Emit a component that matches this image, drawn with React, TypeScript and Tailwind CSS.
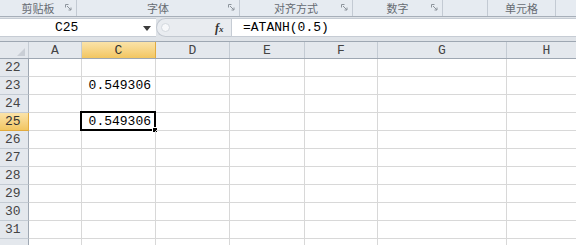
import React from 'react';

const cols = [
  { key: 'A', w: 'w-[53px]' },
  { key: 'C', w: 'w-[74px]' },
  { key: 'D', w: 'w-[74px]' },
  { key: 'E', w: 'w-[75px]' },
  { key: 'F', w: 'w-[73px]' },
  { key: 'G', w: 'w-[129px]' },
  { key: 'H', w: 'w-[80px]' },
];

const rows = [22, 23, 24, 25, 26, 27, 28, 29, 30, 31, 32];

const values: Record<string, string> = {
  'C23': '0.549306',
  'C25': '0.549306',
};

const groups = [
  { label: '剪贴板', w: 'w-[77px]', launcher: true },
  { label: '字体', w: 'w-[163px]', launcher: true },
  { label: '对齐方式', w: 'w-[113px]', launcher: true },
  { label: '数字', w: 'w-[90px]', launcher: true },
  { label: '', w: 'w-[45px]', launcher: false },
  { label: '单元格', w: 'w-[68px]', launcher: false },
];

function Launcher() {
  return (
    <svg width="7" height="7" viewBox="0 0 7 7" className="absolute right-[4px] top-[4px]">
      <path d="M0.5 0.5h3M0.5 0.5v3" stroke="#8d949c" strokeWidth="1" fill="none" />
      <path d="M2 2l4 4M6 3.5V6H3.5" stroke="#8d949c" strokeWidth="1" fill="none" />
    </svg>
  );
}

export default function App() {
  const mono = { fontFamily: '"Liberation Mono", "DejaVu Sans Mono", monospace' };
  return (
    <div className="w-[576px] h-[245px] overflow-hidden bg-[#dfe3e8] flex flex-col select-none">
      {/* ribbon group labels */}
      <div className="h-[17px] flex bg-[#e6ebf1] border-b border-[#a7afb9] shrink-0">
        {groups.map((g, i) => (
          <div
            key={i}
            className={`${g.w} relative shrink-0 border-r border-[#c3cad3] flex items-start justify-center text-[11px] leading-[16px] text-[#676c73]`}
            style={{ fontFamily: '"Noto Sans CJK SC", sans-serif' }}
          >
            {g.label}
            {g.launcher && <Launcher />}
          </div>
        ))}
        <div className="flex-1" />
      </div>

      {/* formula bar */}
      <div className="h-[23px] flex items-start pt-[1px] shrink-0">
        <div className="w-[156px] h-[19px] bg-white border-y border-[#c6ccd4] flex items-center relative shrink-0">
          <span className="absolute left-[55px] top-[1px] text-[13px] leading-[16px] text-black" style={mono}>C25</span>
          <svg width="8" height="5" viewBox="0 0 8 5" className="absolute left-[143px] top-[7px]">
            <path d="M0 0h8L4 5z" fill="#3c3c3c" />
          </svg>
        </div>
        <div className="w-[75px] h-[19px] flex items-center relative shrink-0 bg-[#e9ecf0] border-y border-l border-[#c2c8d0] rounded-l-[10px]">
          <div className="w-[9px] h-[9px] rounded-full bg-[#f7f8fa] border border-[#d3d8de] ml-[4px]" />
          <span
            className="absolute left-[58px] top-[1px] text-[12px] italic font-bold text-[#333] leading-[16px]"
            style={{ fontFamily: '"Liberation Serif", serif' }}
          >
            f<span className="text-[9px]">x</span>
          </span>
        </div>
        <div className="flex-1 h-[19px] bg-white border-y border-l border-[#c6ccd4] flex items-center pl-[11px]">
          <span className="text-[13px] leading-[16px] text-black" style={mono}>=ATANH(0.5)</span>
        </div>
      </div>

      {/* column headers */}
      <div className="h-[18px] flex shrink-0 bg-[#e4e8ed] border-y border-[#9ea7b2] mt-[1px]">
        <div className="w-[29px] h-full border-r border-[#c4cbd3] relative shrink-0">
          <svg width="8" height="8" viewBox="0 0 8 8" className="absolute right-[3px] bottom-[2px]">
            <path d="M8 0V8H0z" fill="#c9ced5" />
          </svg>
        </div>
        {cols.map((c) => (
          <div
            key={c.key}
            className={`${c.w} shrink-0 h-full flex items-center justify-center text-[13px] leading-none ${
              c.key === 'C'
                ? 'bg-gradient-to-b from-[#fbe3a8] to-[#f2c660] border-r border-[#e2ab3f] text-[#333]'
                : 'border-r border-[#c4cbd3] text-[#444]'
            }`}
            style={mono}
          >
            {c.key}
          </div>
        ))}
      </div>

      {/* grid */}
      <div className="flex-1 bg-white">
        {rows.map((r) => (
          <div key={r} className="h-[18px] flex">
            <div
              className={`w-[29px] shrink-0 h-full flex items-center pl-[5px] text-[13px] leading-none border-r border-b ${
                r === 25
                  ? 'bg-gradient-to-b from-[#fbe3a8] to-[#f2c660] border-[#e2ab3f] text-[#333]'
                  : 'bg-[#e4e8ed] border-r-[#9ea7b2] border-b-[#c4cbd3] text-[#444]'
              }`}
              style={mono}
            >
              {r < 32 ? r : ''}
            </div>
            {cols.map((c) => {
              const id = `${c.key}${r}`;
              const v = values[id];
              const selected = id === 'C25';
              return (
                <div
                  key={c.key}
                  className={`${c.w} shrink-0 h-full border-r border-b border-[#d8d8d8] relative flex items-center justify-end pr-[4px] text-[13px] leading-none text-black`}
                  style={mono}
                >
                  {v}
                  {selected && (
                    <>
                      <div className="absolute -left-[2px] -top-[2px] -right-[1px] -bottom-[1px] border-2 border-black" />
                      <div className="absolute -right-[3px] -bottom-[3px] w-[6px] h-[6px] bg-black border border-white" />
                    </>
                  )}
                </div>
              );
            })}
          </div>
        ))}
      </div>
    </div>
  );
}
